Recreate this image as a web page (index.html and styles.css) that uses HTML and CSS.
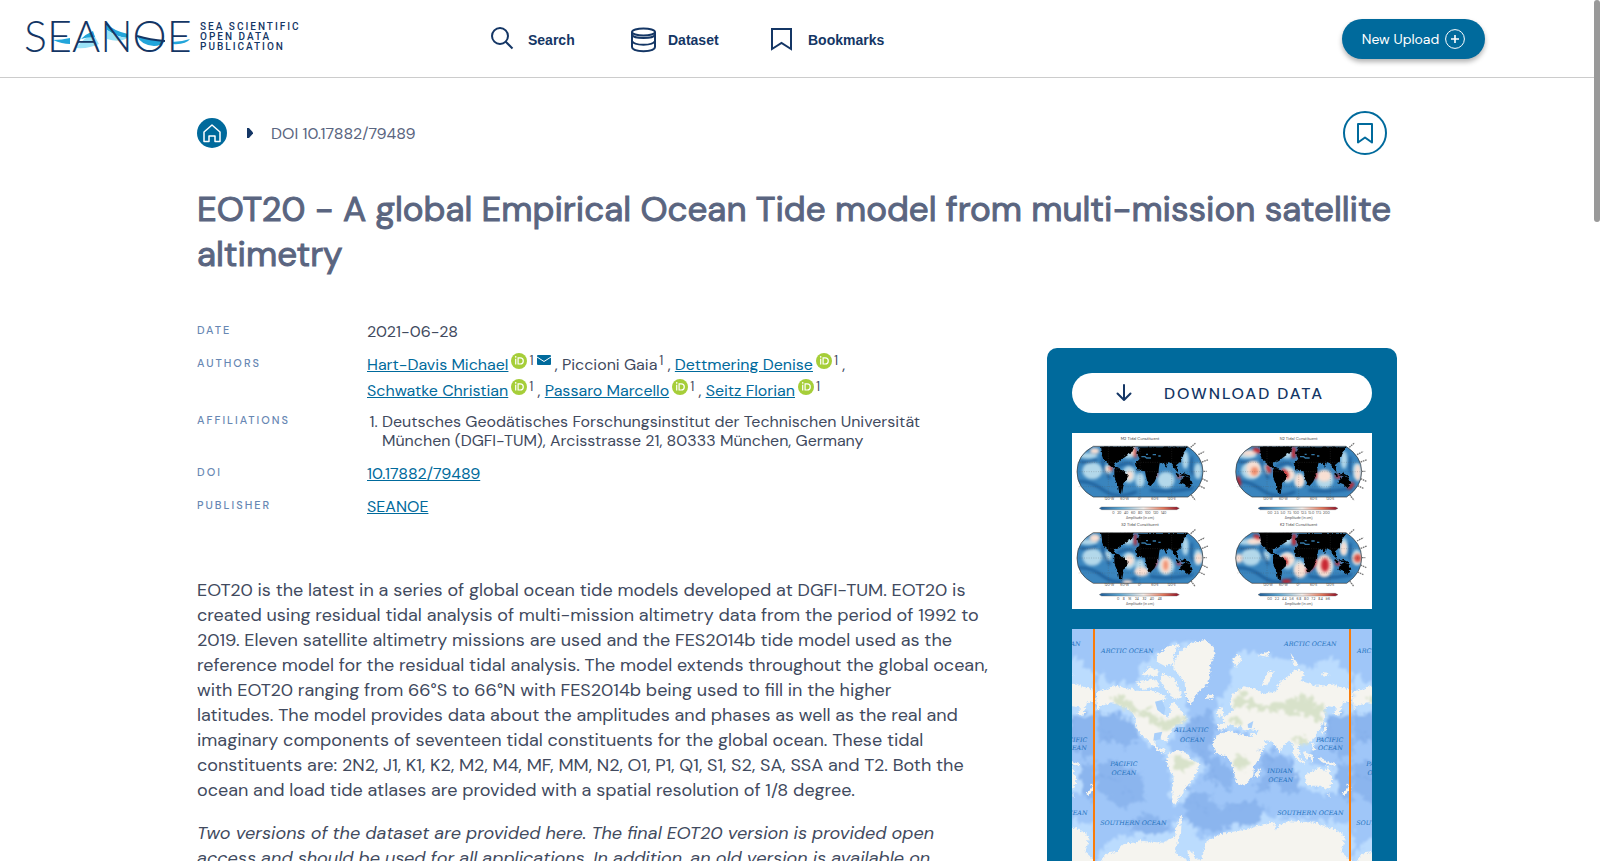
FILE: index.html
```
<!DOCTYPE html>
<html lang="en">
<head>
<meta charset="utf-8">
<title>EOT20 - A global Empirical Ocean Tide model from multi-mission satellite altimetry</title>
<link rel="stylesheet" href="styles.css">
</head>
<body>

<!-- shared icons -->
<svg class="defs" aria-hidden="true">
<symbol id="orcid" viewBox="0 0 16 16">
<circle cx="8" cy="8" r="8" fill="#a6ce39"/>
<path d="M4.7 5.8v5.8" stroke="#fff" stroke-width="1.2"/>
<circle cx="4.7" cy="3.9" r=".8" fill="#fff"/>
<path d="M7.1 4.9h2.1c4.1 0 4.1 6.1 0 6.1H7.1z" fill="none" stroke="#fff" stroke-width="1.2"/>
</symbol>
</svg>

<div class="page">
<header class="header">
<a href="#" class="logo" aria-label="Seanoe">
<svg width="168" height="36" viewBox="0 0 168 36">
<path d="M29 21q9 0 17-2v6q-8 0-17-4z" fill="#22a5da"/>
<path d="M52 29q7-9 17-15l6 11q-10 5-23 4z" fill="#9be2f7"/>
<path d="M57 20q5-5 12-8l2 6q-8 0-14 2z" fill="#22a5da"/>
<path d="M83 5q7 7 21 10v4q-11-1-21-8z" fill="#22a5da"/>
<path d="M83 11q9 7 21 8-9 5-21 1z" fill="#9be2f7"/>
<path d="M113 17q13 4 28 5-4 5-11 5-13-1-17-10z" fill="#22a5da"/>
<path d="M148 23q9 0 18-3-4 6-18 5z" fill="#22a5da"/>
<text x="0" y="33" class="logo-name">SEANOE</text>
<path d="M113 17q13 4 28 5" fill="none" stroke="#143665" stroke-width="2"/>
</svg>
<span class="tagline">SEA SCIENTIFIC<br>OPEN DATA<br>PUBLICATION</span>
</a>
<nav class="nav">
<a href="#"><svg width="26" height="26" viewBox="0 0 26 26"><circle cx="9" cy="9" r="8" /><path d="M14.5 14.5l7 7"/></svg>Search</a>
<a href="#"><svg width="26" height="26" viewBox="0 0 26 26"><ellipse cx="12.500" cy="5" rx="11.500" ry="3.500"/><path d="M1 5v15c0 5.500 23 5.500 23 0V5M1 8c2 4 21 4 23 0M1 14c2 5 21 5 23 0"/></svg>Dataset</a>
<a href="#"><svg width="26" height="26" viewBox="0 0 26 26"><path d="M1 2h19v20l-9.500-6L1 22z"/></svg>Bookmarks</a>
</nav>
<button type="button" class="upload">New Upload
<svg width="20" height="20" viewBox="0 0 20 20"><circle cx="10" cy="10" r="9.400" stroke-width="1"/><path d="M10 6v8M6 10h8" stroke-width="1.600"/></svg>
</button>
</header>

<main class="container">
<div class="breadcrumb">
<a href="#" class="home" aria-label="Home"><svg width="30" height="30" viewBox="0 0 30 30"><path d="M7 14l8-7 8 7v9.500h-5V18h-6v5.500H7z"/></svg></a>
<svg class="caret" width="6" height="10" viewBox="0 0 6 10"><path d="M0 0h2l4 4.500v1L2 10H0z"/></svg>
<span>DOI 10.17882/79489</span>
<button type="button" class="bookmark" aria-label="Add bookmark"><svg width="16" height="21" viewBox="0 0 16 21"><path d="M1 1h14v18.500l-7-5-7 5z"/></svg></button>
</div>

<h1>EOT20 - A global Empirical Ocean Tide model from multi-mission satellite altimetry</h1>

<div class="columns">
<div class="article">
<dl class="meta">
<dt>Date</dt>
<dd>2021-06-28</dd>
<dt>Authors</dt>
<dd class="authors">
<a href="#">Hart-Davis Michael</a><svg class="orcid"><use href="#orcid"/></svg><sup>1</sup><svg class="mail" viewBox="0 0 14 10"><rect width="14" height="10" rx="1"/><path d="M0 2l7 4.500L14 2" fill="none" stroke="#fff"/></svg> , Piccioni Gaia<sup>1</sup> , <a href="#">Dettmering Denise</a><svg class="orcid"><use href="#orcid"/></svg><sup>1</sup> ,<br>
<a href="#">Schwatke Christian</a><svg class="orcid"><use href="#orcid"/></svg><sup>1</sup> , <a href="#">Passaro Marcello</a><svg class="orcid"><use href="#orcid"/></svg><sup>1</sup> , <a href="#">Seitz Florian</a><svg class="orcid"><use href="#orcid"/></svg><sup>1</sup>
</dd>
<dt>Affiliations</dt>
<dd><ol><li>Deutsches Geodätisches Forschungsinstitut der Technischen Universität München (DGFI-TUM), Arcisstrasse 21, 80333 München, Germany</li></ol></dd>
<dt>DOI</dt>
<dd><a href="#">10.17882/79489</a></dd>
<dt>Publisher</dt>
<dd><a href="#">SEANOE</a></dd>
</dl>

<div class="abstract">
<p>EOT20 is the latest in a series of global ocean tide models developed at DGFI-TUM. EOT20 is created using residual tidal analysis of multi-mission altimetry data from the period of 1992 to 2019. Eleven satellite altimetry missions are used and the FES2014b tide model used as the reference model for the residual tidal analysis. The model extends throughout the global ocean, with EOT20 ranging from 66°S to 66°N with FES2014b being used to fill in the higher latitudes.&nbsp;The model provides data about the amplitudes and phases as well as the real and imaginary components of seventeen tidal constituents for the global ocean. These tidal constituents are: 2N2, J1, K1, K2, M2, M4, MF, MM, N2, O1, P1, Q1, S1, S2, SA, SSA and T2. Both the ocean and load tide atlases are provided with a spatial resolution of 1/8 degree.</p>
<p><em>Two versions of the dataset are provided here. The final EOT20 version is provided open access and should be used for all applications. In addition, an old version is available on</em></p>
</div>
</div>

<aside class="side">
<button type="button" class="download">
<svg width="16" height="18" viewBox="0 0 16 18"><path d="M8 1v15M1.500 9.500L8 16l6.500-6.500"/></svg>
DOWNLOAD DATA
</button>

<!-- tidal amplitudes -->
<svg class="tides" viewBox="36 24 900 528">
<defs>
<clipPath id="globe"><path d="M100 64H382Q429 95 429 140Q429 185 384 216H100Q51 190 51 140Q51 90 100 64z"/></clipPath>
<filter id="soft" x="-50%" y="-50%" width="200%" height="200%" color-interpolation-filters="sRGB"><feGaussianBlur stdDeviation="5"/></filter>
<filter id="rough"><feTurbulence baseFrequency=".08" numOctaves="2" seed="4"/><feDisplacementMap in="SourceGraphic" scale="7" xChannelSelector="R" yChannelSelector="G"/></filter>
<linearGradient id="scale"><stop offset="0" stop-color="#1c5a96"/><stop offset=".25" stop-color="#5ca5d0"/><stop offset=".55" stop-color="#f3ede9"/><stop offset=".8" stop-color="#e4785b"/><stop offset="1" stop-color="#8c0d25"/></linearGradient>
<g id="sea">
<path d="M40 60H440V220H40z" fill="#3a85be"/>
<g filter="url(#soft)">
<g fill="#b3d8ea"><ellipse cx="97" cy="137" rx="30" ry="26"/><ellipse cx="85" cy="92" rx="28" ry="9"/><ellipse cx="207" cy="148" rx="20" ry="26"/><ellipse cx="240" cy="165" rx="14" ry="22"/><ellipse cx="318" cy="165" rx="26" ry="25"/><ellipse cx="376" cy="105" rx="10" ry="27"/><ellipse cx="414" cy="138" rx="12" ry="24"/><ellipse cx="142" cy="135" rx="12" ry="16"/><ellipse cx="205" cy="88" rx="18" ry="12"/></g>
<g fill="none" stroke="#13508d" stroke-width="6"><path d="M50 170Q90 165 130 195T230 200M130 95Q120 120 150 160M170 125Q205 108 222 122M270 195Q320 205 400 190M395 95Q390 130 400 150M60 110Q80 116 110 105"/></g>
</g>
</g>
<g id="land">
<g filter="url(#rough)">
<path d="M120 62H222L214 80 200 88 188 96 178 105 164 112 158 112 164 124 176 130 166 132 146 116 131 104 124 88z"/>
<path d="M160 131L180 130 203 148 197 164 187 180 183 204 175 202 171 180 160 155z"/>
<path d="M237 64H382L368 84 360 108 348 118 355 143 342 130 331 112 322 108 316 126 306 110 296 112 294 124 292 143 280 168 267 182 257 163 252 136 230 133 225 112 236 98 229 85z"/>
<path d="M356 172L362 160 376 151 388 155 395 173 384 187 372 178z"/>
<path d="M345 142l12 10M360 146l15 2M372 144l16 8" stroke="#000" stroke-width="5"/>
</g>
<path d="M244 95h11l5 4h13M258 88h6M278 89h10M295 93h7" fill="none" stroke="#3478a7" stroke-width="4"/>
</g>
<g id="frame">
<path d="M100 64H382Q429 95 429 140Q429 185 384 216H100Q51 190 51 140Q51 90 100 64z" fill="none" stroke="#333" stroke-width="2"/>
<path d="M53 112H426M51 140H428M56 185H419M145 64V216M240 64V216M335 64V216" stroke="#555" stroke-width=".8" stroke-dasharray="3 4"/>
<path d="M392 67l16-14M415 89l19-10M426 111l19-7M430 139h10M426 161l17 8M417 182l19 9M393 209l13 17" stroke="#777" stroke-width="4" stroke-dasharray="5 2"/>
<path d="M118 250l7-4H350l8 4-8 4H125z" fill="url(#scale)" stroke="#555"/>
<text x="148" y="224">120°W</text><text x="194" y="224">60°W</text><text x="239" y="224">0°</text><text x="285" y="224">60°E</text><text x="335" y="224">120°E</text>
<text x="240" y="281">Amplitude (in cm)</text>
</g>
</defs>
<rect x="36" y="24" width="900" height="528" fill="#fff"/>
<g>
<g clip-path="url(#globe)"><use href="#sea"/><g filter="url(#soft)"><g fill="#f8dfd3"><ellipse cx="104" cy="78" rx="14" ry="9"/><ellipse cx="143" cy="133" rx="7" ry="9"/><ellipse cx="209" cy="151" rx="10" ry="14"/><ellipse cx="220" cy="78" rx="9" ry="15"/></g><path d="M226 70v28M150 123l6 14M288 140v16M351 154l14 2" stroke="#d73a2e" stroke-width="7"/></g><use href="#land"/></g>
<use href="#frame"/><text x="240" y="44" class="plot-title">M2 Tidal Constituent</text>
<text x="238" y="266" class="ticks">0&#160;&#160; 20&#160;&#160; 40&#160;&#160; 60&#160;&#160; 80&#160;&#160; 100&#160;&#160; 120&#160;&#160; 140</text>
</g>
<g transform="translate(476 0)">
<g clip-path="url(#globe)"><use href="#sea"/><g filter="url(#soft)"><g fill="#f8dfd3"><ellipse cx="104" cy="132" rx="22" ry="25"/><ellipse cx="92" cy="84" rx="24" ry="9"/><ellipse cx="209" cy="149" rx="19" ry="17"/><ellipse cx="243" cy="167" rx="14" ry="20"/><ellipse cx="317" cy="152" rx="21" ry="18"/><ellipse cx="418" cy="143" rx="9" ry="26"/></g><ellipse cx="108" cy="139" rx="11" ry="13" fill="#f09070"/><path d="M104 73q14 0 21 10M225 66v33M146 121l8 22M190 135q21 10 12 24M289 137v24M350 153l16 3M404 174l-15 17M57 155l6 27" fill="none" stroke="#c91f24" stroke-width="11"/></g><use href="#land"/></g>
<use href="#frame"/><text x="240" y="44" class="plot-title">N2 Tidal Constituent</text>
<text x="240" y="266" class="ticks">0.0&#160; 2.5&#160; 5.0&#160; 7.5&#160; 10.0&#160; 12.5&#160; 15.0&#160; 17.5&#160; 20.0</text>
</g>
<g transform="translate(0 259)">
<g clip-path="url(#globe)"><use href="#sea"/><g filter="url(#soft)"><g fill="#f8dfd3"><ellipse cx="104" cy="80" rx="16" ry="12"/><ellipse cx="317" cy="162" rx="17" ry="25"/><ellipse cx="208" cy="147" rx="13" ry="15"/><ellipse cx="245" cy="181" rx="22" ry="14"/><ellipse cx="417" cy="141" rx="12" ry="16"/><ellipse cx="202" cy="212" rx="15" ry="6"/></g><ellipse cx="317" cy="162" rx="7" ry="15" fill="#f09070"/><path d="M226 68v34M288 142q2 20-13 27M350 155l14 3M194 68l18-3" fill="none" stroke="#c91f24" stroke-width="8"/></g><use href="#land"/></g>
<use href="#frame"/><text x="240" y="44" class="plot-title">S2 Tidal Constituent</text>
<text x="238" y="266" class="ticks">0&#160;&#160;&#160; 8&#160;&#160;&#160; 16&#160;&#160;&#160; 24&#160;&#160;&#160; 32&#160;&#160;&#160; 40&#160;&#160;&#160; 48</text>
</g>
<g transform="translate(476 259)">
<g clip-path="url(#globe)"><use href="#sea"/><g filter="url(#soft)"><g fill="#f8dfd3"><ellipse cx="110" cy="90" rx="24" ry="10"/><ellipse cx="317" cy="164" rx="24" ry="34"/><ellipse cx="205" cy="144" rx="23" ry="19"/><ellipse cx="245" cy="177" rx="20" ry="23"/><ellipse cx="417" cy="141" rx="17" ry="18"/><ellipse cx="375" cy="112" rx="10" ry="20"/><ellipse cx="60" cy="141" rx="12" ry="14"/></g><ellipse cx="319" cy="161" rx="12" ry="20" fill="#c92732"/><ellipse cx="417" cy="141" rx="11" ry="12" fill="#d44d43"/><path d="M105 74q12 0 18 8M226 68v34M289 142q2 26-27 37M350 155l14 3M191 71l20-5M193 141q13 6 8 19M191 210h25" fill="none" stroke="#c91f24" stroke-width="11"/></g><use href="#land"/></g>
<use href="#frame"/><text x="240" y="44" class="plot-title">K2 Tidal Constituent</text>
<text x="240" y="266" class="ticks">0.0&#160;&#160; 2.2&#160;&#160; 4.4&#160;&#160; 5.6&#160;&#160; 6.8&#160;&#160; 8.0&#160;&#160; 7.2&#160;&#160; 8.4&#160;&#160; 9.6</text>
</g>
</svg>

<!-- geographic coverage -->
<svg class="map" viewBox="36 27 900 900">
<defs>
<filter id="coast" x="-5%" y="-5%" width="110%" height="110%"><feTurbulence baseFrequency=".09" numOctaves="3" seed="8"/><feDisplacementMap in="SourceGraphic" scale="13" xChannelSelector="R" yChannelSelector="G"/></filter>
<filter id="haze" x="-20%" y="-20%" width="140%" height="140%"><feTurbulence baseFrequency=".035" numOctaves="3" seed="2"/><feDisplacementMap in="SourceGraphic" scale="42" xChannelSelector="R" yChannelSelector="G"/><feGaussianBlur stdDeviation="3"/></filter>
<g id="world">
<rect x="102" y="20" width="769" height="920" fill="#9fc6f8"/>
<g filter="url(#haze)">
<g fill="#bbdcfe">
<path d="M102 150L160 185 215 180 240 120 320 70 400 60 370 250 380 280 375 310 330 340 310 370 330 400 380 395 430 425 395 480 360 550 330 550 310 400 210 320 180 265 102 280z"/>
<path d="M500 180L515 90 590 90 680 110 740 135 800 105 870 160V270L800 330 760 360 740 420 830 430 840 500 790 520 700 480 690 390 660 400 630 370 600 400 550 330 470 330 450 280z"/>
<path d="M102 690L160 640 330 630 340 580 390 600 410 650 600 580 870 600V780H102z"/>
</g>
<g fill="#8bb5ee">
<path d="M102 275L160 270 205 300 235 350 180 380 150 350 102 360zM102 420L160 410 230 460 240 530 170 560 102 500z"/>
<path d="M380 290L440 270 460 320 440 370 455 410 510 440 500 510 450 470 420 480 440 430 380 375 350 335z"/>
<path d="M590 400L645 400 700 430 715 505 680 520 630 470 600 510 570 500 610 450z"/>
<path d="M795 285L870 270V390L830 410 800 355 775 350zM815 420L870 425V540L835 520z"/>
<path d="M370 510L430 510 460 560 570 535 620 560 580 600 430 625 370 600zM190 600L250 570 320 600 300 630 230 640z"/>
</g>
<g fill="none" stroke="#78a5e3" stroke-width="2"><path d="M110 290Q140 360 200 385M110 455Q170 455 205 520M405 290Q385 350 430 410T450 540Q520 565 570 540M620 390Q635 450 610 500M800 280Q785 320 830 370M370 545Q430 535 430 575"/></g>
</g>
<g filter="url(#coast)" fill="#f5f4ef">
<path d="M335 132L348 104 367 84 397 64 433 57 457 77 464 100 451 123 447 163 441 190 417 207 400 230 394 251 382 243 373 213 371 185 347 155z"/>
<path d="M105 210L139 206 154 193 184 199 225 209 267 210 296 215 317 231 297 245 292 265 317 289 330 275 327 254 340 245 361 267 377 294 362 307 347 309 334 322 325 342 316 362 295 349 284 355 283 371 295 383 310 381 313 397 326 399 306 396 279 378 259 357 237 336 226 315 223 291 210 267 184 253 154 247 122 254 107 267z"/>
<path d="M289 103L322 77 357 69 341 96 335 129 313 136 287 122zM242 162L267 139 293 149 289 166zM225 185L282 175 297 196 247 207zM307 157L341 175 363 229 342 237 317 202 297 179zM301 186L337 196 323 215z"/>
<path d="M325 399L349 387 379 397 390 415 417 429 408 454 395 477 375 499 366 519 351 531 345 554 334 545 334 504 338 469 322 443 319 414z"/>
<path d="M455 364L474 340 507 329 536 340 568 349 585 388 606 387 595 414 579 436 577 465 554 490 529 491 519 455 512 424 495 405 464 399z"/>
<path d="M584 455L599 440 596 464 586 469z"/>
<path d="M471 325L473 309 490 309 487 290 505 275 519 266 505 249 515 219 549 196 585 205 606 219 647 210 652 190 677 169 706 144 730 154 721 180 765 194 815 191 872 207 872 236 847 245 835 284 818 279 825 259 795 255 790 274 793 294 779 315 769 335 759 349 746 365 721 365 710 380 720 398 703 404 694 369 685 359 670 369 659 394 644 379 636 363 615 357 617 370 605 383 579 389 557 349 575 347 570 339 590 339 595 329 565 324 549 329 539 314 524 322 510 309 495 319 485 329z"/>
<path d="M515 115L533 99 542 113 525 141zM591 102L627 91 619 108zM689 96L713 133 697 132zM602 191L620 154 639 151 619 193zM780 155L806 159 790 169zM437 223L459 221 456 233 438 233zM470 265L485 259 490 285 472 287z"/>
<path d="M732 474L739 460 756 450 775 438 792 450 801 437 812 467 814 489 800 508 782 494 756 494 737 493zM797 521L806 517 805 528z"/>
<path d="M696 392L715 417 731 426M727 394L741 402 736 415M749 401L756 422M775 413L801 427 823 431M782 336L792 329 794 305M753 367L760 389" fill="none" stroke="#f5f4ef" stroke-width="7"/>
<path d="M847 522L867 500 862 489M835 275L830 255" fill="none" stroke="#f5f4ef" stroke-width="8"/>
<path d="M139 697L165 694 187 670 247 660 304 665 342 647 347 616 363 577 360 637 347 676 342 695 387 722 382 687 397 691 402 717 422 714 437 661 475 640 545 627 605 611 639 602 645 627 654 613 687 601 765 605 835 632 853 647 841 694 887 732V940H102V735z"/>
</g>
<path d="M283 340L307 335 300 358 280 362zM285 245L305 240 316 265 312 285 292 270zM563 313L580 303 575 325 564 323z" fill="#a9cffa"/>
<g filter="url(#haze)" fill="#d8e2ca">
<path d="M140 220L170 217 215 255 260 260 285 290 330 288 360 275 370 285 325 320 280 310 245 280 210 270 160 240z"/>
<path d="M510 225L530 210 600 245 640 235 690 235 720 210 785 265 775 295 700 275 620 265 565 260 540 240 530 265 510 250z"/>
<path d="M325 405L355 395 395 415 375 440 345 445zM515 403L550 400 560 420 540 445 520 430zM700 345L740 340 725 370 700 360z"/>
<path d="M490 292L530 282 545 300 515 305z"/>
</g>
<g class="ocean">
<text x="202" y="99">ARCTIC OCEAN</text>
<text x="751" y="78">ARCTIC OCEAN</text>
<text x="394" y="335">ATLANTIC</text><text x="397" y="365">OCEAN</text>
<text x="192" y="437">PACIFIC</text><text x="192" y="464">OCEAN</text>
<text x="809" y="365">PACIFIC</text><text x="811" y="390">OCEAN</text>
<text x="660" y="459">INDIAN</text><text x="662" y="486">OCEAN</text>
<text x="220" y="615">SOUTHERN OCEAN</text>
<text x="751" y="585">SOUTHERN OCEAN</text>
</g>
</g>
</defs>
<use href="#world" x="-768"/><use href="#world" x="768"/><use href="#world"/>
<path d="M102 20V930M870 20V930" stroke="#f97c0a" stroke-width="6"/>
</svg>
</aside>
</div>
</main>
</div>
<div class="scrollbar"></div>

</body>
</html>
```
FILE: styles.css
```
*{box-sizing:border-box;}
body{
margin:0;
color:#414a5e;
background-color:#fff;
font-family:"DM Sans",Inter,sans-serif;
font-size:16px;}
a{color:#006a9c;}
button{
font-family:inherit;
cursor:pointer;}
.defs{
position:absolute;
width:0;
height:0;}
.page{
height:100vh;
padding-right:6px;
overflow:hidden;}
.scrollbar{
position:fixed;
top:0;
right:0;
width:6px;
height:222px;
border-radius:3px;
background-color:#999;}

.header{
display:flex;
align-items:center;
height:78px;
padding:1px 109px 0 24px;
border-bottom:1px solid #ccc;}
.logo{
display:flex;
align-items:center;
gap:8px;
width:467px;
padding-bottom:5px;
text-decoration:none;}
.logo svg{overflow:visible;}
.logo-name{
fill:#143665;
font-family:Lato,sans-serif;
font-size:43px;
font-weight:300;}
.tagline{
color:#143665;
font-family:Roboto,sans-serif;
font-size:10px;
font-weight:500;
line-height:10px;
letter-spacing:2px;
white-space:nowrap;}
.nav{
display:flex;
flex:1;
padding-top:2px;}
.nav a{
display:flex;
align-items:center;
gap:11px;
width:140px;
color:#143665;
font-family:"Liberation Sans",Arial,sans-serif;
font-size:14px;
font-weight:bold;
text-decoration:none;
white-space:nowrap;}
.nav svg{
fill:none;
stroke:#143665;
stroke-width:2;}
.upload{
display:flex;
align-items:center;
justify-content:center;
gap:6px;
width:143px;
height:40px;
padding:0;
border:0;
border-radius:20px;
color:#fff;
background-color:#006a9c;
font-size:14px;
box-shadow:0 3px 5px rgba(0,0,0,.3);}
.upload svg{
fill:none;
stroke:#fff;}

.container{
max-width:1200px;
margin:0 auto;
padding-top:33px;}
.breadcrumb{
display:flex;
align-items:center;
margin-right:10px;
color:#5a6580;}
.home{
display:flex;
border-radius:50%;
background-color:#006a9c;}
.home svg{
fill:none;
stroke:#fff;
stroke-width:1.5;
stroke-linejoin:round;}
.caret{
margin:0 18px 0 20px;
fill:#143665;}
.bookmark{
display:flex;
align-items:center;
justify-content:center;
width:44px;
height:44px;
margin-left:auto;
padding:0;
border:2px solid #006a9c;
border-radius:50%;
background-color:#fff;}
.bookmark svg{
fill:none;
stroke:#006a9c;
stroke-width:2;
stroke-linejoin:round;}
h1{
margin:32px 0 45px;
color:#5a6580;
font-size:35px;
font-weight:400;
line-height:45px;
-webkit-text-stroke:1px #5a6580;}

.columns{
display:flex;
align-items:flex-start;
justify-content:space-between;}
.article{width:794px;}
.meta{
display:grid;
grid-template-columns:170px 560px;
row-gap:13px;
margin:0 0 61px;
line-height:20px;}
dt{
color:#6787b3;
font-size:11px;
font-weight:500;
line-height:16px;
letter-spacing:2px;
text-transform:uppercase;}
dd{margin:0;}
.authors{
line-height:26px;
margin-top:-3px;
margin-bottom:-5px;
white-space:nowrap;}
sup{
margin-left:2px;
font-size:13px;
line-height:0;
vertical-align:5px;}
.orcid{
width:16px;
height:16px;
margin-left:3px;
vertical-align:1px;}
.mail{
width:14px;
height:10px;
margin-left:3px;
fill:#006a9c;
vertical-align:5px;}
ol{
margin:0;
padding:0 0 1px 15px;
line-height:19px;}
.abstract{
font-size:18px;
line-height:25px;}
.abstract p{margin:0 0 18px;}

.side{
display:flex;
flex-direction:column;
gap:20px;
width:350px;
margin-top:26px;
padding:25px;
border-radius:10px;
background-color:#006a9c;}
.download{
display:flex;
align-items:center;
justify-content:center;
gap:32px;
height:40px;
padding:0 4px 0 0;
border:0;
border-radius:20px;
color:#143665;
background-color:#fff;
font-size:16px;
font-weight:500;
letter-spacing:2px;}
.download svg{
fill:none;
stroke:#143665;
stroke-width:2;
stroke-linecap:round;
stroke-linejoin:round;}
.tides,.map{
display:block;
width:100%;}
.tides text{
fill:#444;
font-size:10px;
text-anchor:middle;}
.tides .plot-title{font-size:12px;}
.ocean{
fill:#2472bd;
font-family:"DejaVu Serif",serif;
font-size:19px;
font-style:italic;
text-anchor:middle;}
```
